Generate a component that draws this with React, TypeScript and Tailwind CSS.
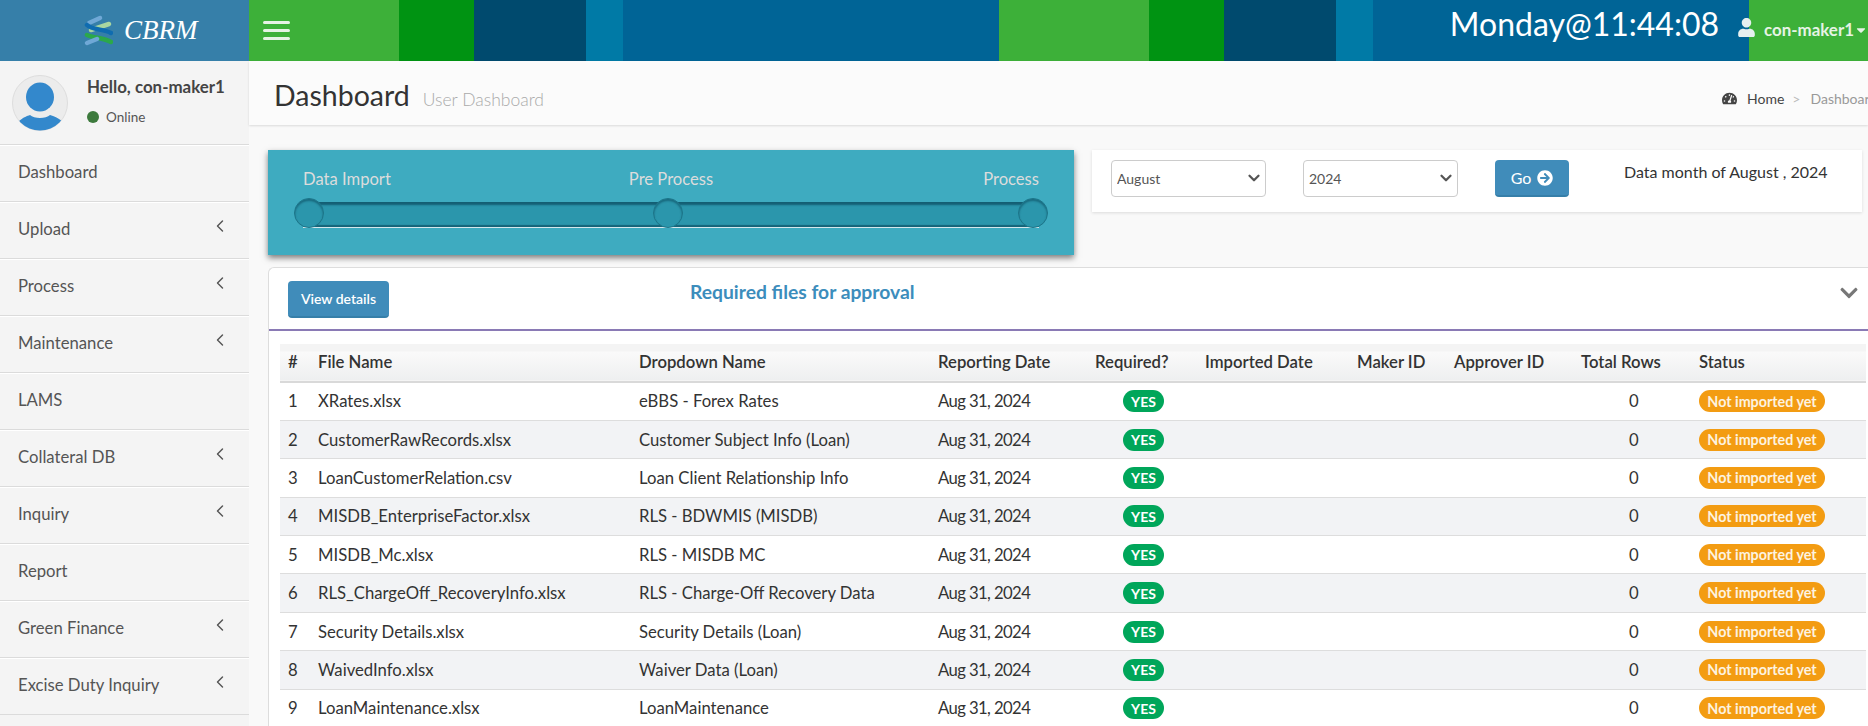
import { ChevronDown, ChevronLeft } from "lucide-react";
import { FaArrowCircleRight, FaCaretDown, FaChevronDown, FaTachometerAlt, FaUser } from "react-icons/fa";

const menu = [
  { label: "Dashboard" },
  { label: "Upload", sub: true },
  { label: "Process", sub: true },
  { label: "Maintenance", sub: true },
  { label: "LAMS" },
  { label: "Collateral DB", sub: true },
  { label: "Inquiry", sub: true },
  { label: "Report" },
  { label: "Green Finance", sub: true },
  { label: "Excise Duty Inquiry", sub: true },
];

const files = [
  ["XRates.xlsx", "eBBS - Forex Rates"],
  ["CustomerRawRecords.xlsx", "Customer Subject Info (Loan)"],
  ["LoanCustomerRelation.csv", "Loan Client Relationship Info"],
  ["MISDB_EnterpriseFactor.xlsx", "RLS - BDWMIS (MISDB)"],
  ["MISDB_Mc.xlsx", "RLS - MISDB MC"],
  ["RLS_ChargeOff_RecoveryInfo.xlsx", "RLS - Charge-Off Recovery Data"],
  ["Security Details.xlsx", "Security Details (Loan)"],
  ["WaivedInfo.xlsx", "Waiver Data (Loan)"],
  ["LoanMaintenance.xlsx", "LoanMaintenance"],
];

const columns = ["#", "File Name", "Dropdown Name", "Reporting Date", "Required?", "Imported Date", "Maker ID", "Approver ID", "Total Rows", "Status"];

function Logo() {
  return (
    <svg width="29" height="31" viewBox="0 0 29 31" fill="none" strokeLinecap="round" className="shrink-0">
      <path d="M5 8 L16 3" stroke="#6fa8d6" strokeWidth="4.5" />
      <path d="M7 15 L25 9" stroke="#a9d6a0" strokeWidth="4.5" />
      <path d="M3 10 C 8 15, 20 14, 27 18" stroke="#0f6cb0" strokeWidth="4.5" />
      <path d="M3 20 C 10 23, 20 23, 27 27" stroke="#2ba84a" strokeWidth="4.5" />
      <path d="M3 28 L13 24" stroke="#6fa8d6" strokeWidth="4.5" />
    </svg>
  );
}

function Avatar() {
  return (
    <svg width="56" height="56" viewBox="0 0 56 56" className="shrink-0">
      <clipPath id="avatar-clip">
        <circle cx="28" cy="28" r="27.5" />
      </clipPath>
      <circle cx="28" cy="28" r="27.5" fill="#ececec" stroke="#dddddd" />
      <g clipPath="url(#avatar-clip)">
        <ellipse cx="28" cy="22" rx="14" ry="14.5" fill="#3388cc" />
        <path d="M7 46 C 12 42, 15 41, 18 40 C 22 44, 34 44, 38 40 C 42 41, 46 43, 50 46 L 50 60 L 6 60 Z" fill="#3388cc" />
      </g>
    </svg>
  );
}

function Sidebar() {
  return (
    <aside className="w-[249px] shrink-0 bg-[#f4f4f4]">
      <div className="flex h-[84px] items-center gap-[19px] border-b border-[#dbdbdb] pl-[12px]">
        <Avatar />
        <div className="mt-[-2px]">
          <p className="text-[16.9px] font-bold leading-[22px] text-[#444444]">Hello, con-maker1</p>
          <p className="mt-[9px] flex items-center gap-[7px] text-[13.5px] leading-[20px] text-[#555555]">
            <span className="h-[12px] w-[12px] rounded-full bg-[#3d7a3d]" />
            Online
          </p>
        </div>
      </div>
      {menu.map((item) => (
        <div
          key={item.label}
          className="flex h-[57px] items-center justify-between border-b border-t border-b-[#dbdbdb] border-t-white pb-[1px] pl-[18px] pr-[19px] text-[16.7px] text-[#555555]"
        >
          {item.label}
          {item.sub && <ChevronLeft size={20} strokeWidth={1.7} className="mt-[-8px] text-[#555555]" />}
        </div>
      ))}
    </aside>
  );
}

function ProcessSteps() {
  return (
    <div className="h-[105px] w-[806px] shrink-0 bg-[#3eabc0] px-[26px] pt-[17px] shadow-[0_3px_6px_rgba(0,0,0,0.5)]">
      <div className="flex justify-between px-[9px] text-[16.6px] leading-[24px] text-[#dcdcdc]">
        <span>Data Import</span>
        <span className="mr-[32px]">Pre Process</span>
        <span>Process</span>
      </div>
      <div className="relative mt-[7px] flex h-[30px] items-center justify-between">
        <div className="absolute left-[9px] right-[9px] top-[4px] h-[26px] border-b border-[#d5e8ec] bg-[#2b96ac] shadow-[inset_0_3px_2px_rgba(0,50,70,0.55),inset_0_-2px_1px_rgba(0,50,70,0.5)]" />
        <span className="relative h-[30px] w-[30px] rounded-full border border-[#1c7488] bg-[#2b96ac] shadow-[inset_0_2px_2px_rgba(0,50,70,0.45)]" />
        <span className="relative mr-[7px] h-[30px] w-[30px] rounded-full border border-[#1c7488] bg-[#2b96ac] shadow-[inset_0_2px_2px_rgba(0,50,70,0.45)]" />
        <span className="relative h-[30px] w-[30px] rounded-full border border-[#1c7488] bg-[#2b96ac] shadow-[inset_0_2px_2px_rgba(0,50,70,0.45)]" />
      </div>
    </div>
  );
}

function MonthSelect({ value, className }: { value: string; className?: string }) {
  return (
    <div className={`relative h-[37px] w-[155px] ${className ?? ""}`}>
      <select defaultValue={value} className="h-full w-full appearance-none rounded border border-[#cccccc] bg-white pl-[5px] text-[14px] text-[#555555]">
        <option>{value}</option>
      </select>
      <ChevronDown size={18} strokeWidth={3} className="pointer-events-none absolute right-[3px] top-[9px] text-[#555555]" />
    </div>
  );
}

function FilterBar() {
  return (
    <div className="ml-[18px] flex h-[62px] w-[770px] items-start bg-white pl-[19px] pt-[10px] shadow-[0_1px_3px_rgba(0,0,0,0.12)]">
      <MonthSelect value="August" />
      <MonthSelect value="2024" className="ml-[37px]" />
      <button className="ml-[37px] flex h-[37px] w-[74px] items-center justify-center gap-[6px] rounded border-b-2 border-[#367fa9] bg-[#408cba] text-[16px] text-white">
        Go <FaArrowCircleRight className="text-[16px]" />
      </button>
      <p className="ml-[55px] mt-[2px] text-[16px] leading-[20px] text-[#333333]">Data month of August , 2024</p>
    </div>
  );
}

function FilesTable() {
  return (
    <table className="ml-[11px] w-[1586px] table-fixed border-collapse text-[16.7px] text-[#333333]">
      <colgroup>
        <col className="w-[30px]" />
        <col className="w-[321px]" />
        <col className="w-[299px]" />
        <col className="w-[157px]" />
        <col className="w-[110px]" />
        <col className="w-[152px]" />
        <col className="w-[97px]" />
        <col className="w-[127px]" />
        <col className="w-[118px]" />
        <col className="w-[175px]" />
      </colgroup>
      <thead>
        <tr className="h-[38px] border-b-2 border-[#d9d9d9] bg-[linear-gradient(#f4f4f4_0,#f4f4f4_7px,#fafafa_8px,#eeeff0_100%)] text-left">
          {columns.map((c) => (
            <th key={c} className="px-[8px] font-semibold">
              {c}
            </th>
          ))}
        </tr>
      </thead>
      <tbody>
        {files.map(([file, dropdown], i) => (
          <tr key={file} className={`h-[38.4px] border-b border-[#dddddd] ${i % 2 === 1 ? "bg-[#f2f3f5]" : "bg-white"}`}>
            <td className="px-[8px] pt-[1px]">{i + 1}</td>
            <td className="px-[8px] pt-[1px]">{file}</td>
            <td className="px-[8px] pt-[1px]">{dropdown}</td>
            <td className="px-[8px] pt-[1px] tracking-[-0.6px]">Aug 31, 2024</td>
            <td className="pl-[36px]">
              <span className="flex h-[22px] w-[41px] items-center justify-center rounded-full bg-[#00a65a] text-[14px] font-bold text-white">YES</span>
            </td>
            <td />
            <td />
            <td />
            <td className="pl-[56px] pt-[1px]">0</td>
            <td className="pl-[8px]">
              <span className="flex h-[22px] w-[126px] items-center justify-center rounded-full bg-[#f39c12] text-[14.3px] font-bold text-[#fdf3e0]">Not imported yet</span>
            </td>
          </tr>
        ))}
      </tbody>
    </table>
  );
}

export default function App() {
  return (
    <div className="flex h-[726px] w-[1868px] flex-col overflow-hidden bg-[#f9f9f9] font-['Lato',sans-serif]">
      <header className="flex h-[61px] shrink-0">
        <div className="flex w-[249px] items-center gap-[11px] bg-[#367fa9] pl-[84px]">
          <Logo />
          <span className="font-['Liberation_Serif',serif] text-[27px] italic text-white">CBRM</span>
        </div>
        <nav className="flex flex-1 items-center bg-[repeating-linear-gradient(90deg,#3db039_0,#3db039_150px,#009312_150px,#009312_225px,#004a6e_225px,#004a6e_337px,#007aa6_337px,#007aa6_374px,#006496_374px,#006496_750px)] pl-[14px]">
          <div className="flex w-[27px] flex-col gap-[5px]">
            <span className="h-[3px] rounded-sm bg-[#e6f3e5]" />
            <span className="h-[3px] rounded-sm bg-[#e6f3e5]" />
            <span className="h-[3px] rounded-sm bg-[#e6f3e5]" />
          </div>
          <span className="ml-auto mt-[-14px] text-[32px] leading-[40px] text-white">Monday@11:44:08</span>
          <FaUser className="ml-[18px] mt-[-6px] text-[19px] text-[#e6f0f0]" />
          <span className="ml-[8px] mt-[-2px] text-[16.9px] font-bold text-[#e6f3e5]">con-maker1</span>
          <FaCaretDown className="mt-[-2px] shrink-0 text-[14px] text-[#e6f3e5]" />
        </nav>
      </header>

      <div className="flex min-h-0 flex-1">
        <Sidebar />
        <main className="min-w-0 flex-1">
          <div className="flex h-[64px] w-[1619px] items-center bg-[#fbfbfb] pl-[25px] shadow-[0_1px_2px_rgba(0,0,0,0.12)]">
            <h1 className="mt-[4px] text-[28.5px] text-[#333333]">Dashboard</h1>
            <span className="ml-[13px] mt-[14px] text-[17.5px] font-light text-[#aaaaaa]">User Dashboard</span>
            <div className="ml-auto mt-[10px] flex w-[146px] items-center overflow-hidden whitespace-nowrap text-[14px]">
              <FaTachometerAlt className="shrink-0 text-[15px] text-[#444444]" />
              <span className="ml-[10px] text-[#444444]">Home</span>
              <span className="ml-[8px] text-[#bbbbbb]">&gt;</span>
              <span className="ml-[10px] text-[#999999]">Dashboard</span>
            </div>
          </div>

          <div className="pl-[19px] pt-[25px]">
            <div className="flex items-start">
              <ProcessSteps />
              <FilterBar />
            </div>

            <section className="mt-[12px] w-[1620px] rounded-tl-md border-l border-t border-[#dddddd] bg-white">
              <div className="flex h-[63px] items-start border-b-2 border-[#8a7ab5] pl-[19px] pt-[13px]">
                <button className="h-[37px] w-[101px] rounded border-b-2 border-[#367fa9] bg-[#408cba] text-[14px] font-semibold text-white">View details</button>
                <h3 className="ml-[301px] mt-[-1px] text-[19.3px] font-bold leading-[24px] text-[#3c8dbc]">Required files for approval</h3>
                <FaChevronDown className="ml-auto mr-[29px] mt-[2px] text-[20px] text-[#777777]" />
              </div>
              <div className="pt-[13px]">
                <FilesTable />
              </div>
            </section>
          </div>
        </main>
      </div>
    </div>
  );
}
